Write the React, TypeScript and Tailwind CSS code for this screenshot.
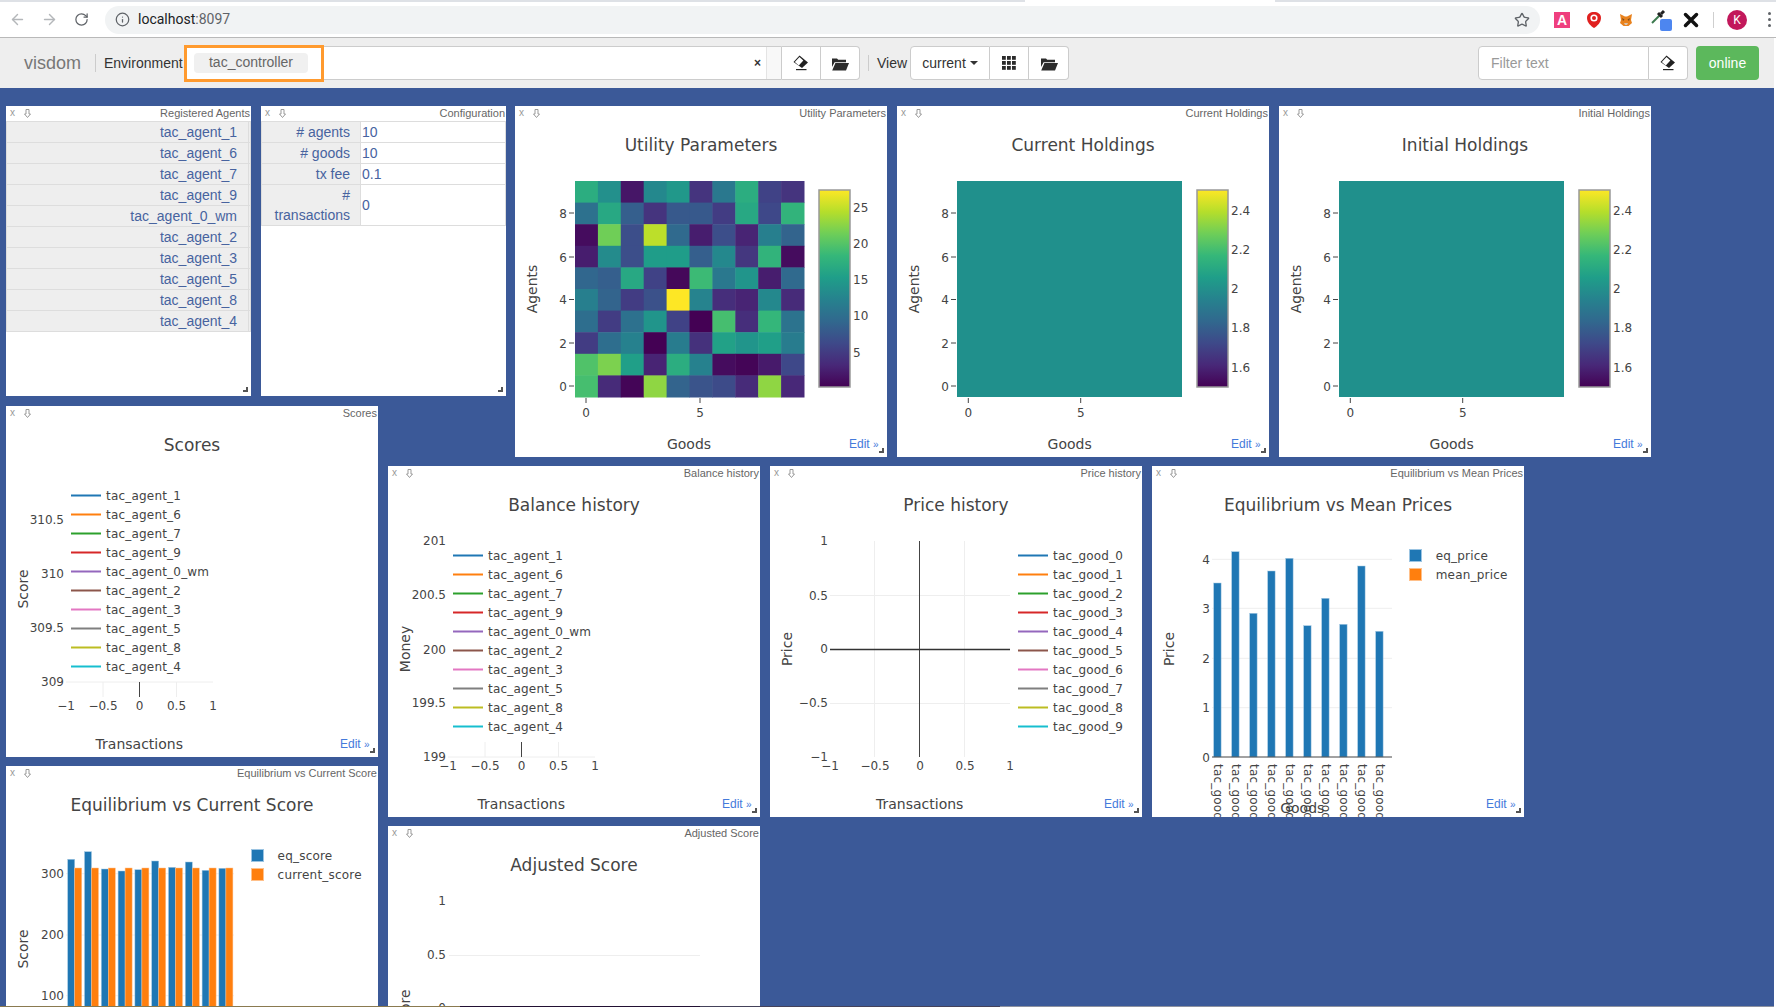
import { ArrowLeft, ArrowRight, RotateCw, Info, Star } from "lucide-react";
import type { ReactNode } from "react";

const LINE_COLORS = ["#1f77b4", "#ff7f0e", "#2ca02c", "#d62728", "#9467bd", "#8c564b", "#e377c2", "#7f7f7f", "#bcbd22", "#17becf"];
const AGENTS = ["tac_agent_1", "tac_agent_6", "tac_agent_7", "tac_agent_9", "tac_agent_0_wm", "tac_agent_2", "tac_agent_3", "tac_agent_5", "tac_agent_8", "tac_agent_4"];
const GOODS = ["tac_good_0", "tac_good_1", "tac_good_2", "tac_good_3", "tac_good_4", "tac_good_5", "tac_good_6", "tac_good_7", "tac_good_8", "tac_good_9"];

const VIRIDIS = ["#440154", "#482878", "#3e4989", "#31688e", "#26828e", "#1f9e89", "#35b779", "#6ece58", "#b5de2b", "#fde725"];

// top row first, values are 0..1 on the colour scale
const UTILITY = [
  [0.62, 0.5, 0.06, 0.47, 0.53, 0.15, 0.4, 0.62, 0.2, 0.15],
  [0.37, 0.6, 0.3, 0.15, 0.28, 0.28, 0.18, 0.6, 0.22, 0.65],
  [0.03, 0.78, 0.24, 0.9, 0.34, 0.08, 0.24, 0.1, 0.43, 0.32],
  [0.08, 0.48, 0.24, 0.55, 0.55, 0.3, 0.47, 0.16, 0.65, 0.03],
  [0.33, 0.3, 0.6, 0.2, 0.02, 0.68, 0.4, 0.52, 0.08, 0.34],
  [0.43, 0.32, 0.18, 0.25, 1, 0.45, 0.13, 0.1, 0.47, 0.12],
  [0.36, 0.18, 0.37, 0.52, 0.2, 0, 0.7, 0.13, 0.66, 0.38],
  [0.18, 0.36, 0.44, 0, 0.42, 0.14, 0.57, 0.52, 0.56, 0.42],
  [0.72, 0.8, 0.56, 0.1, 0.62, 0.44, 0.03, 0.01, 0.07, 0.22],
  [0.7, 0.12, 0.01, 0.83, 0.32, 0.26, 0.23, 0.12, 0.83, 0.11],
];

const PRICE_TOPS = [117, 85.7, 147.3, 105, 92.3, 159.7, 132.3, 158.3, 100, 165.3];
const SCORE_TOPS = [93.3, 85.7, 103, 105, 103.7, 95, 101.3, 96, 104.3, 102.3];

function hexToRgb(hex: string) {
  return [1, 3, 5].map((i) => parseInt(hex.slice(i, i + 2), 16));
}

function viridis(t: number) {
  const pos = t * (VIRIDIS.length - 1);
  const i = Math.min(Math.floor(pos), VIRIDIS.length - 2);
  const a = hexToRgb(VIRIDIS[i]);
  const b = hexToRgb(VIRIDIS[i + 1]);
  const f = pos - i;
  const c = a.map((v, k) => Math.round(v + (b[k] - v) * f));
  return `rgb(${c[0]},${c[1]},${c[2]})`;
}

function EraserIcon() {
  return (
    <svg width="16" height="16" viewBox="0 0 16 16">
      <path d="M.5 7 6.500.5 15 7.500 9 13z" fill="#222" />
      <path d="M1.800 7 6.500 2 10.300 5.400 5.800 10.400z" fill="#fff" />
      <rect x="3" y="14" width="10.500" height="1.200" fill="#222" />
    </svg>
  );
}

function FolderIcon() {
  return (
    <svg width="18" height="15" viewBox="0 0 18 15">
      <path d="M1 2.400h5l1.200 1.400H15v2.400H3.600L1 11z" fill="#2b2b2b" />
      <path d="M4.400 7H18l-3 7.400H1.200z" fill="#2b2b2b" />
    </svg>
  );
}

function GridIcon() {
  return (
    <svg width="14" height="14" viewBox="0 0 14 14" fill="#2b2b2b">
      {[0, 5, 10].map((y) =>
        [0, 5, 10].map((x) => <rect key={`${x}-${y}`} x={x} y={y} width="3.8" height="3.8" />)
      )}
    </svg>
  );
}

function BrowserBar() {
  return (
    <div className="w-full bg-white">
      <div className="flex h-[2px]">
        <div className="w-[1025px] bg-[#dee1e6]" />
        <div className="w-[250px] bg-white" />
        <div className="flex-1 bg-[#dee1e6]" />
      </div>
      <div className="flex h-[36px] items-center border-b border-[#b9b9b9]">
        <div className="flex w-[105px] items-center pl-[9px]">
          <ArrowLeft size={17} className="text-[#b4b7ba]" />
          <ArrowRight size={17} className="ml-[15px] text-[#b4b7ba]" />
          <RotateCw size={15} className="ml-[16px] text-[#5f6368]" />
        </div>
        <div className="flex h-[28px] w-[1435px] items-center rounded-full bg-[#f1f3f4] pl-[10px] font-['Roboto',sans-serif] text-[14px]">
          <Info size={15} className="text-[#5f6368]" />
          <span className="ml-[8px] text-[#202124]">localhost</span>
          <span className="text-[#5f6368]">:8097</span>
          <Star size={16} className="ml-auto mr-[10px] text-[#5f6368]" />
        </div>
        <div className="ml-[14px] flex h-[16px] w-[16px] items-center justify-center bg-[#ef3f7e] font-['Liberation_Sans',sans-serif] text-[14px] font-bold leading-none text-white">
          A
        </div>
        <svg width="16" height="18" viewBox="0 0 16 18" className="ml-[16px]">
          <path d="M8 1c3.600 0 7 1.800 7 6 0 4.400-3.600 8-7 10C4.600 15 1 11.400 1 7c0-4.200 3.400-6 7-6z" fill="#e0201f" />
          <circle cx="8" cy="7" r="3.600" fill="#fff" />
          <circle cx="8" cy="7" r="2" fill="#e0201f" />
        </svg>
        <svg width="14" height="14" viewBox="0 0 14 14" className="ml-[17px]">
          <path d="M1 1l5 2.500h2L13 1l-1 6 1 3-3.500 3h-5L1 10l1-3z" fill="#e8821e" />
          <path d="M3 5l2.500 1.500L4 8zM11 5L8.500 6.500 10 8z" fill="#7a4a1c" />
          <path d="M5 10h4l-1 2H6z" fill="#d8c3ae" />
        </svg>
        <div className="relative ml-[17px] h-[22px] w-[22px]">
          <svg width="16" height="16" viewBox="0 0 16 16" className="absolute left-0 top-0">
            <path d="M2 14 10 6" stroke="#3c7a4e" strokeWidth="2" />
            <path d="M8 4l4 4" stroke="#222" strokeWidth="3" />
            <path d="M11 5l3-3" stroke="#222" strokeWidth="3" />
          </svg>
          <div className="absolute bottom-0 right-0 h-[12px] w-[12px] rounded-[2px] bg-[#4d86f0]" />
        </div>
        <svg width="16" height="16" viewBox="0 0 16 16" className="ml-[11px]">
          <path d="M2.500 2.500 13.500 13.500M13.500 2.500 2.500 13.500" stroke="#111" strokeWidth="3.500" strokeLinecap="round" />
        </svg>
        <div className="ml-[14px] h-[16px] w-px bg-[#cfcfcf]" />
        <div className="ml-[13px] flex h-[20px] w-[20px] items-center justify-center rounded-full bg-[#c2185b] font-['Roboto',sans-serif] text-[12px] text-white">
          K
        </div>
        <div className="ml-[21px] flex flex-col gap-[3px]">
          <div className="h-[3px] w-[3px] rounded-full bg-[#5f6368]" />
          <div className="h-[3px] w-[3px] rounded-full bg-[#5f6368]" />
          <div className="h-[3px] w-[3px] rounded-full bg-[#5f6368]" />
        </div>
      </div>
    </div>
  );
}

function NavButton({ className, children }: { className: string; children: ReactNode }) {
  return <div className={`flex h-[34px] items-center justify-center border border-[#ccc] bg-white ${className}`}>{children}</div>;
}

function NavBar() {
  return (
    <div className="flex h-[50px] w-full items-center bg-[#eee] font-['Liberation_Sans',sans-serif] text-[14px] text-[#333]">
      <span className="ml-[24px] w-[57px] text-[18px] text-[#777]">visdom</span>
      <div className="ml-[14px] h-[18px] w-px bg-[#ccc]" />
      <span className="ml-[8px] w-[77px]">Environment</span>
      <div className="ml-[3px] flex h-[34px] w-[598px] items-center rounded-l-[4px] border border-[#ccc] bg-white">
        <div className="-ml-px flex h-[37px] w-[140px] items-center border-[3px] border-[#ff9a2e] pl-[7px]">
          <div className="-mt-[1px] flex h-[20px] w-[114px] items-center justify-center rounded-[4px] bg-[#f0f0f0] text-[#666]">tac_controller</div>
        </div>
        <span className="ml-auto mr-[5px] text-[12px] font-bold text-[#333]">×</span>
        <div className="h-full w-[15px] border-l border-[#e4e4e4] bg-[#f8f8f8]" />
      </div>
      <NavButton className="w-[39px] border-l-0">
        <EraserIcon />
      </NavButton>
      <NavButton className="w-[39px] rounded-r-[4px] border-l-0">
        <FolderIcon />
      </NavButton>
      <div className="ml-[8px] h-[16px] w-px bg-[#ccc]" />
      <span className="ml-[8px] w-[33px]">View</span>
      <NavButton className="w-[80px] rounded-l-[4px]">
        current
        <span className="ml-[4px] h-0 w-0 border-x-[4px] border-t-[4px] border-x-transparent border-t-[#333]" />
      </NavButton>
      <NavButton className="w-[39px] border-l-0">
        <GridIcon />
      </NavButton>
      <NavButton className="w-[40px] rounded-r-[4px] border-l-0">
        <FolderIcon />
      </NavButton>
      <div className="ml-[409px] flex h-[34px] w-[171px] items-center rounded-l-[4px] border border-[#ccc] bg-white pl-[12px] text-[#999]">Filter text</div>
      <NavButton className="w-[39px] rounded-r-[4px] border-l-0">
        <EraserIcon />
      </NavButton>
      <div className="ml-[8px] flex h-[34px] w-[63px] items-center justify-center rounded-[4px] bg-[#5cb85c] text-white">online</div>
    </div>
  );
}

function Panel({ title, className, children }: { title: string; className: string; children: ReactNode }) {
  return (
    <div className={`absolute overflow-hidden bg-white font-['Liberation_Sans',sans-serif] ${className}`}>
      <div className="relative z-10 flex h-[15px] items-center justify-end pr-px text-[11px] leading-[15px] text-[#666]">
        <span className="absolute left-[4px] top-0 text-[10px] leading-[13px] text-[#999]">x</span>
        <svg width="7" height="9" viewBox="0 0 7 9" className="absolute left-[18px] top-[3px]">
          <path d="M2 .5h3v4.500h1.500L3.500 8.500.5 5H2z" fill="none" stroke="#999" strokeWidth="1" />
        </svg>
        {title}
      </div>
      {children}
      <div className="absolute bottom-[4px] right-[3px] z-10 h-[5px] w-[5px] border-b-2 border-r-2 border-[#555]" />
    </div>
  );
}

function YTick({ x = 58, y, label }: { x?: number; y: number; label: string }) {
  return (
    <text x={x} y={y + 4.5} textAnchor="end" className="text-[12px]">
      {label}
    </text>
  );
}

function XTick({ x, y = 304, label }: { x: number; y?: number; label: string }) {
  return (
    <text x={x} y={y} textAnchor="middle" className="text-[12px]">
      {label}
    </text>
  );
}

function PlotTitle({ label }: { label: string }) {
  return (
    <text x={186} y={45} textAnchor="middle" className="text-[17px]">
      {label}
    </text>
  );
}

function XTitle({ x, y = 343, label }: { x: number; y?: number; label: string }) {
  return (
    <text x={x} y={y} textAnchor="middle" className="text-[14px]">
      {label}
    </text>
  );
}

function YTitle({ x = 22, label }: { x?: number; label: string }) {
  return (
    <text x={x} y={183} textAnchor="middle" transform={`rotate(-90 ${x} 183)`} className="text-[14px]">
      {label}
    </text>
  );
}

function EditLink() {
  return (
    <text x={334} y={342} className="fill-[#447adb] font-['Liberation_Sans',sans-serif] text-[12px]">
      Edit <tspan className="text-[10px]">»</tspan>
    </text>
  );
}

function LineLegend({ x, labels }: { x: number; labels: string[] }) {
  return (
    <g>
      {labels.map((label, i) => (
        <g key={label}>
          <line x1={x} x2={x + 30} y1={89.5 + i * 19} y2={89.5 + i * 19} stroke={LINE_COLORS[i]} strokeWidth="2" />
          <text x={x + 35} y={94 + i * 19} className="text-[12px] tracking-[0.2px]">
            {label}
          </text>
        </g>
      ))}
    </g>
  );
}

function BoxLegend({ x, textX, labels }: { x: number; textX: number; labels: string[] }) {
  return (
    <g>
      {labels.map((label, i) => (
        <g key={label}>
          <rect x={x + 0.5} y={83.5 + i * 19} width="12" height="12" fill={LINE_COLORS[i]} stroke={i === 0 ? "#9bc4e2" : "#ffc08a"} strokeWidth="1" />
          <text x={textX} y={94 + i * 19} className="text-[12px] tracking-[0.2px]">
            {label}
          </text>
        </g>
      ))}
    </g>
  );
}

function Plot({ children }: { children: ReactNode }) {
  return <svg className="absolute left-0 top-0 h-[351px] w-[372px] fill-[#444] font-['DejaVu_Sans',sans-serif]">{children}</svg>;
}

function ColorBar({ id, x }: { id: string; x: number }) {
  return (
    <g>
      <defs>
        <linearGradient id={id} x1="0" x2="0" y1="1" y2="0">
          {VIRIDIS.map((c, i) => (
            <stop key={c} offset={i / (VIRIDIS.length - 1)} stopColor={c} />
          ))}
        </linearGradient>
      </defs>
      <rect x={x} y={84} width="31" height="197" fill={`url(#${id})`} stroke="#999" strokeWidth="1.500" />
    </g>
  );
}

function HeatAxes({ ticks }: { ticks: number[] }) {
  return (
    <g>
      {[["8", 107], ["6", 151], ["4", 193.5], ["2", 237], ["0", 280]].map(([label, y]) => (
        <g key={label}>
          <line x1={54} x2={59} y1={Number(y)} y2={Number(y)} stroke="#444" />
          <YTick x={52} y={Number(y)} label={String(label)} />
        </g>
      ))}
      {ticks.map((x, i) => (
        <g key={x}>
          <line x1={x} x2={x} y1={292} y2={297} stroke="#444" />
          <XTick x={x} y={311} label={i === 0 ? "0" : "5"} />
        </g>
      ))}
      <YTitle label="Agents" />
    </g>
  );
}

function UtilityPlot() {
  return (
    <Plot>
      <PlotTitle label="Utility Parameters" />
      {UTILITY.map((row, r) =>
        row.map((v, c) => <rect key={`${r}-${c}`} x={60 + c * 22.9} y={75 + r * 21.6} width="23.4" height="22.1" fill={viridis(v)} />)
      )}
      <HeatAxes ticks={[71, 185]} />
      <ColorBar id="bar-utility" x={304} />
      {[["25", 101], ["20", 137], ["15", 173], ["10", 209], ["5", 246]].map(([label, y]) => (
        <text key={label} x={338} y={Number(y) + 4.5} className="text-[12px]">
          {label}
        </text>
      ))}
      <XTitle x={174} label="Goods" />
      <EditLink />
    </Plot>
  );
}

function HoldingsPlot({ id, title }: { id: string; title: string }) {
  return (
    <Plot>
      <PlotTitle label={title} />
      <rect x={60} y={75} width="225" height="216" fill="#20908c" />
      <HeatAxes ticks={[71.3, 183.7]} />
      <ColorBar id={id} x={300} />
      {[["2.4", 104.7], ["2.2", 143.7], ["2", 182.7], ["1.8", 221.7], ["1.6", 261.7]].map(([label, y]) => (
        <text key={label} x={334} y={Number(y) + 4.5} className="text-[12px]">
          {label}
        </text>
      ))}
      <XTitle x={172.7} label="Goods" />
      <EditLink />
    </Plot>
  );
}

function SmallAxis() {
  return (
    <g>
      <line x1={97} x2={97} y1={276} y2={291} stroke="#eee" />
      <line x1={170.500} x2={170.500} y1={276} y2={291} stroke="#eee" />
      <line x1={133.500} x2={133.500} y1={276} y2={291} stroke="#444" />
      {[["−1", 60], ["−0.5", 97], ["0", 133.5], ["0.5", 170.5], ["1", 207]].map(([label, x]) => (
        <XTick key={label} x={Number(x)} label={String(label)} />
      ))}
    </g>
  );
}

function ScoresPlot() {
  return (
    <Plot>
      <PlotTitle label="Scores" />
      <line x1={60} x2={207} y1={276} y2={276} stroke="#eee" />
      <SmallAxis />
      {[["310.5", 113.3], ["310", 167.3], ["309.5", 221.7], ["309", 275.7]].map(([label, y]) => (
        <YTick key={label} y={Number(y)} label={String(label)} />
      ))}
      <LineLegend x={65} labels={AGENTS} />
      <YTitle label="Score" />
      <XTitle x={133.3} label="Transactions" />
      <EditLink />
    </Plot>
  );
}

function BalancePlot() {
  return (
    <Plot>
      <PlotTitle label="Balance history" />
      <line x1={60} x2={207} y1={291} y2={291} stroke="#eee" />
      <SmallAxis />
      {[["201", 74.5], ["200.5", 128.7], ["200", 183], ["199.5", 236.5], ["199", 290.7]].map(([label, y]) => (
        <YTick key={label} y={Number(y)} label={String(label)} />
      ))}
      <LineLegend x={65} labels={AGENTS} />
      <YTitle label="Money" />
      <XTitle x={133.3} label="Transactions" />
      <EditLink />
    </Plot>
  );
}

function PriceHistoryPlot() {
  return (
    <Plot>
      <PlotTitle label="Price history" />
      {[104.5, 194.5].map((x) => (
        <line key={x} x1={x} x2={x} y1={75} y2={291} stroke="#eee" />
      ))}
      {[129.5, 237.5].map((y) => (
        <line key={y} x1={60} x2={240} y1={y} y2={y} stroke="#eee" />
      ))}
      <line x1={149.500} x2={149.500} y1={75} y2={291} stroke="#444" />
      <line x1={60} x2={240} y1={183.500} y2={183.500} stroke="#333" strokeWidth="1.300" />
      {[["1", 74.7], ["0.5", 129], ["0", 182.7], ["−0.5", 236.7], ["−1", 290.7]].map(([label, y]) => (
        <YTick key={label} y={Number(y)} label={String(label)} />
      ))}
      {[["−1", 60], ["−0.5", 105], ["0", 150], ["0.5", 195], ["1", 240]].map(([label, x]) => (
        <XTick key={label} x={Number(x)} label={String(label)} />
      ))}
      <LineLegend x={248} labels={GOODS} />
      <YTitle label="Price" />
      <XTitle x={149.7} label="Transactions" />
      <EditLink />
    </Plot>
  );
}

function PricesBarPlot() {
  return (
    <Plot>
      <PlotTitle label="Equilibrium vs Mean Prices" />
      {[93.3, 142.3, 192.3, 241.7].map((y) => (
        <line key={y} x1={60} x2={240} y1={y} y2={y} stroke="#eee" />
      ))}
      {PRICE_TOPS.map((top, i) => (
        <rect key={i} x={61.7 + i * 18} y={top} width="7.4" height={291 - top} fill="#1f77b4" stroke="#a5c9e3" strokeWidth="0.5" />
      ))}
      <line x1={60} x2={240} y1={291} y2={291} stroke="#444" />
      {[["4", 93], ["3", 142.3], ["2", 192], ["1", 241.5], ["0", 291]].map(([label, y]) => (
        <YTick key={label} y={Number(y)} label={String(label)} />
      ))}
      {GOODS.map((label, i) => (
        <text key={label} x={62.4 + i * 18} y={298} transform={`rotate(90 ${62.4 + i * 18} 298)`} className="text-[12px] tracking-[0.2px]">
          {label}
        </text>
      ))}
      <BoxLegend x={257} textX={283.7} labels={["eq_price", "mean_price"]} />
      <YTitle label="Price" />
      <XTitle x={150.3} y={347} label="Goods" />
      <EditLink />
    </Plot>
  );
}

function ScoreBarPlot() {
  return (
    <Plot>
      <PlotTitle label="Equilibrium vs Current Score" />
      {[107.7, 169, 229.7, 291].map((y) => (
        <line key={y} x1={60} x2={228} y1={y} y2={y} stroke="#eee" />
      ))}
      {SCORE_TOPS.map((top, i) => (
        <g key={i}>
          <rect x={61.7 + i * 16.8} y={top} width="7" height={351 - top} fill="#1f77b4" stroke="#a5c9e3" strokeWidth="0.5" />
          <rect x={68.7 + i * 16.8} y={102} width="7" height={249} fill="#ff7f0e" stroke="#ffc08a" strokeWidth="0.5" />
        </g>
      ))}
      {[["300", 107.7], ["200", 168], ["100", 229.7]].map(([label, y]) => (
        <YTick key={label} y={Number(y)} label={String(label)} />
      ))}
      <BoxLegend x={245} textX={271.6} labels={["eq_score", "current_score"]} />
      <YTitle label="Score" />
    </Plot>
  );
}

function AdjustedPlot() {
  return (
    <Plot>
      <PlotTitle label="Adjusted Score" />
      <line x1={61} x2={312} y1={129.500} y2={129.500} stroke="#eee" />
      <YTick y={74} label="1" />
      <YTick y={128} label="0.5" />
      <YTick y={181} label="0" />
      <YTitle label="Score" />
    </Plot>
  );
}

function AgentsTable() {
  return (
    <table className="w-full table-fixed border-collapse text-[14px] text-[#47639f]">
      <tbody>
        {AGENTS.map((name) => (
          <tr key={name} className="h-[21px]">
            <td className="w-[242px] border border-[#ddd] bg-[#eee] p-0 pr-[11px] text-right leading-[20px]">{name}</td>
            <td className="border border-[#ddd] bg-[#eee] p-0" />
          </tr>
        ))}
      </tbody>
    </table>
  );
}

function ConfigTable() {
  const rows: [string, ReactNode, string][] = [
    ["agents", "# agents", "10"],
    ["goods", "# goods", "10"],
    ["fee", "tx fee", "0.1"],
    [
      "transactions",
      <>
        #<br />
        transactions
      </>,
      "0",
    ],
  ];
  return (
    <table className="w-full border-collapse text-[14px] text-[#47639f]">
      <tbody>
        {rows.map(([id, label, value]) => (
          <tr key={id} className="h-[21px]">
            <td className="w-[99px] border border-[#ddd] bg-[#eee] p-0 pr-[10px] text-right leading-[20px]">{label}</td>
            <td className="border border-[#ddd] p-0 pl-px leading-[20px]">{value}</td>
          </tr>
        ))}
      </tbody>
    </table>
  );
}

export default function App() {
  return (
    <div className="flex h-screen w-full flex-col overflow-hidden bg-white">
      <BrowserBar />
      <div className="flex w-[1774px] flex-1 flex-col overflow-hidden">
        <NavBar />
        <div className="relative w-full flex-1 overflow-hidden bg-[#3b5998]">
          <Panel title="Registered Agents" className="left-[6px] top-[18px] h-[290px] w-[245px]">
            <AgentsTable />
          </Panel>
          <Panel title="Configuration" className="left-[261px] top-[18px] h-[290px] w-[245px]">
            <ConfigTable />
          </Panel>
          <Panel title="Utility Parameters" className="left-[515px] top-[18px] h-[351px] w-[372px]">
            <UtilityPlot />
          </Panel>
          <Panel title="Current Holdings" className="left-[897px] top-[18px] h-[351px] w-[372px]">
            <HoldingsPlot id="bar-current" title="Current Holdings" />
          </Panel>
          <Panel title="Initial Holdings" className="left-[1279px] top-[18px] h-[351px] w-[372px]">
            <HoldingsPlot id="bar-initial" title="Initial Holdings" />
          </Panel>
          <Panel title="Scores" className="left-[6px] top-[318px] h-[351px] w-[372px]">
            <ScoresPlot />
          </Panel>
          <Panel title="Balance history" className="left-[388px] top-[378px] h-[351px] w-[372px]">
            <BalancePlot />
          </Panel>
          <Panel title="Price history" className="left-[770px] top-[378px] h-[351px] w-[372px]">
            <PriceHistoryPlot />
          </Panel>
          <Panel title="Equilibrium vs Mean Prices" className="left-[1152px] top-[378px] h-[351px] w-[372px]">
            <PricesBarPlot />
          </Panel>
          <Panel title="Equilibrium vs Current Score" className="left-[6px] top-[678px] h-[351px] w-[372px]">
            <ScoreBarPlot />
          </Panel>
          <Panel title="Adjusted Score" className="left-[388px] top-[738px] h-[351px] w-[372px]">
            <AdjustedPlot />
          </Panel>
        </div>
        <div className="flex h-px w-full">
          <div className="w-[460px] bg-[#8a7a50]" />
          <div className="w-[240px] bg-[#221133]" />
          <div className="w-[300px] bg-[#44425a]" />
          <div className="flex-1 bg-[#8d92a0]" />
        </div>
      </div>
    </div>
  );
}
